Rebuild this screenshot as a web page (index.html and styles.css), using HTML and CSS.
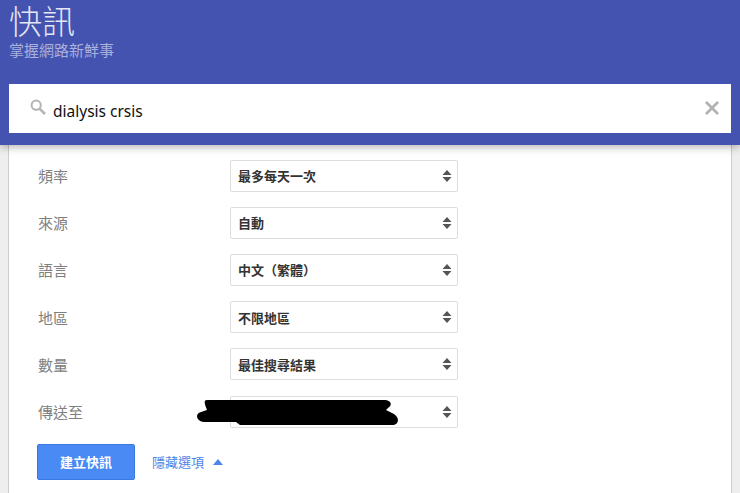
FILE: index.html
```html
<!DOCTYPE html>
<html lang="zh-Hant">
<head>
<meta charset="utf-8">
<title>快訊</title>
<link rel="stylesheet" href="styles.css">
</head>
<body>
<header class="masthead">
  <h1 class="title">快訊</h1>
  <p class="subtitle">掌握網路新鮮事</p>
  <div class="search">
    <svg class="search-icon" width="16" height="16" viewBox="0 0 16 16"><circle cx="6.2" cy="6.2" r="4.6" fill="none" stroke="#b4b4b4" stroke-width="2"/><path d="M9.8 9.8 15 15" stroke="#b4b4b4" stroke-width="2.6" fill="none"/></svg>
    <span class="query">dialysis crsis</span>
    <svg class="clear-icon" width="14" height="14" viewBox="0 0 14 14"><path d="M1 1 13 13M13 1 1 13" stroke="#b2b2b2" stroke-width="2.8" fill="none"/></svg>
  </div>
</header>
<main class="form">
  <div class="row"><span class="label">頻率</span><div class="select"><span>最多每天一次</span><svg class="arrows" width="10" height="14" viewBox="0 0 10 14"><path d="M5 1 9.5 6H.5ZM5 13 .5 8h9Z" fill="#555"/></svg></div></div>
  <div class="row"><span class="label">來源</span><div class="select"><span>自動</span><svg class="arrows" width="10" height="14" viewBox="0 0 10 14"><path d="M5 1 9.5 6H.5ZM5 13 .5 8h9Z" fill="#555"/></svg></div></div>
  <div class="row"><span class="label">語言</span><div class="select"><span>中文（繁體）</span><svg class="arrows" width="10" height="14" viewBox="0 0 10 14"><path d="M5 1 9.5 6H.5ZM5 13 .5 8h9Z" fill="#555"/></svg></div></div>
  <div class="row"><span class="label">地區</span><div class="select"><span>不限地區</span><svg class="arrows" width="10" height="14" viewBox="0 0 10 14"><path d="M5 1 9.5 6H.5ZM5 13 .5 8h9Z" fill="#555"/></svg></div></div>
  <div class="row"><span class="label">數量</span><div class="select"><span>最佳搜尋結果</span><svg class="arrows" width="10" height="14" viewBox="0 0 10 14"><path d="M5 1 9.5 6H.5ZM5 13 .5 8h9Z" fill="#555"/></svg></div></div>
  <div class="row"><span class="label">傳送至</span><div class="select"><svg class="arrows" width="10" height="14" viewBox="0 0 10 14"><path d="M5 1 9.5 6H.5ZM5 13 .5 8h9Z" fill="#555"/></svg>
    <svg class="redaction" width="202" height="26" viewBox="0 0 202 26"><path d="M11 1H188C195 1 197 6 192 9L190 11 198 15C204 19 203 26 196 26H44L40 23H8C1 23-2 15 5 13L11 11C9 6 7 1 11 1Z" fill="#000"/></svg></div></div>
  <div class="actions">
    <button class="create" type="button">建立快訊</button>
    <span class="toggle">隱藏選項<svg class="caret" width="10" height="6" viewBox="0 0 10 6"><path d="M5 0 10 6H0Z" fill="#4a86e8"/></svg></span>
  </div>
</main>
</body>
</html>
```
FILE: styles.css
```css
* { box-sizing: border-box; }
html, body { margin: 0; height: 493px; overflow: hidden; background: #eeeeee; }
body { font-family: "Noto Sans CJK TC", "Liberation Sans", sans-serif; }
.masthead {
  height: 145px;
  background: #4453af;
  padding: 0 9px;
  box-shadow: 0 2px 8px rgba(0,0,0,.3);
  position: relative;
}
.title { margin: 0; height: 40px; font-size: 33px; line-height: 40px; font-weight: 300; color: #e4e7f5; }
.subtitle { margin: 0; height: 44px; font-size: 15px; line-height: 20px; color: #a9b1dd; }
.search {
  height: 49px;
  background: #fff;
  display: flex;
  align-items: center;
  padding: 0 12px 0 21px;
}
.search-icon { margin-top: -4px; }
.query { margin-left: 7px; padding-top: 5px; font-family: "Noto Sans", sans-serif; font-size: 15.5px; color: #111; flex: 1; }
.clear-icon { margin-top: -1px; }
.form {
  height: 348px;
  margin: 0 8px;
  padding: 7px 0 0 29px;
  background: #fff;
  border-left: 1px solid #ccc;
  border-right: 1px solid #ccc;
}
.row { display: flex; align-items: center; height: 47.2px; }
.label { width: 192px; font-size: 15px; color: #808080; }
.select {
  position: relative;
  width: 228px;
  height: 32px;
  border: 1px solid #ddd;
  border-radius: 2px;
  display: flex;
  align-items: center;
  justify-content: space-between;
  padding: 0 5px 0 7px;
  font-size: 13px;
  font-weight: 700;
  color: #333;
}
.arrows { margin-left: auto; }
.redaction { position: absolute; left: -35px; top: 2px; }
.actions { display: flex; align-items: center; margin-top: 9px; margin-left: -1px; }
.create {
  width: 98px;
  height: 36px;
  padding: 0 0 1px;
  border: 1px solid #3b78e0;
  border-radius: 2px;
  background: #4a8af4;
  color: #fff;
  font: 700 13px "Noto Sans CJK TC", sans-serif;
}
.toggle { margin-left: 17px; margin-top: -1px; font-size: 13px; color: #4a86e8; display: flex; align-items: center; }
.caret { margin-left: 9px; }
```
